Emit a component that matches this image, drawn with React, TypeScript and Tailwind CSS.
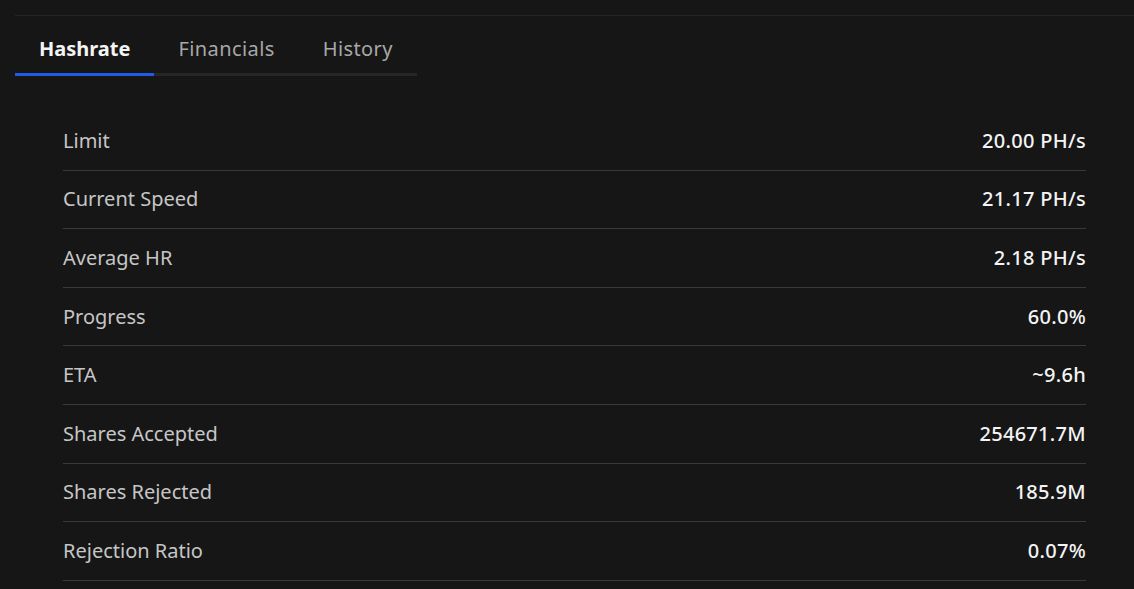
import React from 'react';

const rows = [
  { label: 'Limit', value: '20.00 PH/s' },
  { label: 'Current Speed', value: '21.17 PH/s' },
  { label: 'Average HR', value: '2.18 PH/s' },
  { label: 'Progress', value: '60.0%' },
  { label: 'ETA', value: '~9.6h' },
  { label: 'Shares Accepted', value: '254671.7M' },
  { label: 'Shares Rejected', value: '185.9M' },
  { label: 'Rejection Ratio', value: '0.07%' },
];

const tabs = ['Hashrate', 'Financials', 'History'];

export default function App() {
  return (
    <div
      className="min-h-screen bg-[#161616] pt-[15px] pl-[15px] overflow-hidden"
      style={{ fontFamily: '"Noto Sans", "Open Sans", sans-serif' }}
    >
      <div className="border-t border-[#262626]">
        <div className="flex w-max border-b-[3px] border-[#262626]">
          {tabs.map((tab, i) => (
            <div
              key={tab}
              className={
                i === 0
                  ? 'px-6 pt-[19px] pb-[10px] text-[20px] leading-7 font-bold text-[#f4f4f4] -mb-[3px] border-b-[3px] border-[#1f5be8]'
                  : 'px-6 pt-[19px] pb-[10px] text-[20px] leading-7 tracking-[0.4px] text-[#a8a8a8]'
              }
            >
              {tab}
            </div>
          ))}
        </div>

        <div className="mt-[36px] ml-[48px] w-[1023px]">
          {rows.map((row) => (
            <div
              key={row.label}
              className="h-[58.6px] flex items-center justify-between border-b border-[#393939] text-[20px]"
            >
              <span className="text-[#c6c6c6]">{row.label}</span>
              <span className="text-[#f4f4f4] font-medium tracking-[0.3px]">{row.value}</span>
            </div>
          ))}
        </div>
      </div>
    </div>
  );
}
